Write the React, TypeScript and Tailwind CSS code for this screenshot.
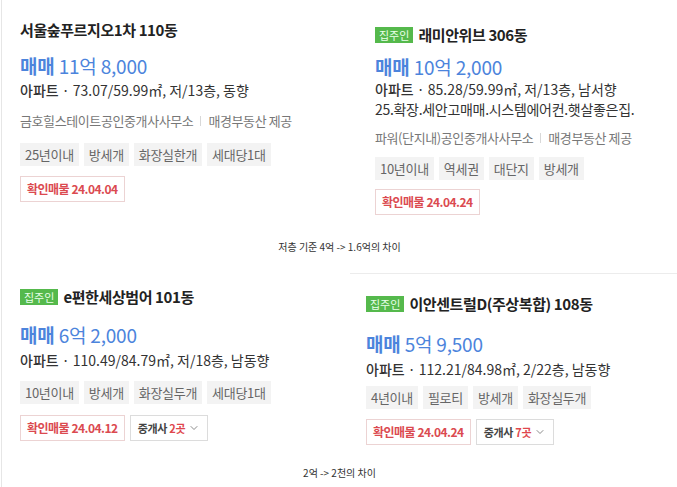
import React from "react";
import { ChevronDown } from "lucide-react";

const font = { fontFamily: '"Noto Sans CJK KR", "Noto Sans", sans-serif' };

function Badge() {
  return (
    <span className="mr-[5px] inline-flex h-[16px] items-center bg-[#55b94c] px-[4px] text-[11px] leading-none text-[#eaffea]">
      집주인
    </span>
  );
}

function Title({ text, owner }: { text: string; owner?: boolean }) {
  return (
    <div className="flex h-[18px] items-center">
      {owner && <Badge />}
      <span className="text-[15px] font-bold leading-[18px] tracking-[-0.4px] text-[#222]">{text}</span>
    </div>
  );
}

function Price({ eok, man }: { eok: string; man: string }) {
  return (
    <div className="h-[22px] text-[19px] leading-[22px] tracking-[-0.2px] text-[#4c84dc]">
      <span className="font-bold">매매</span> {eok} {man}
    </div>
  );
}

function Spec({ text }: { text: string }) {
  return (
    <div className="h-[18px] text-[14px] leading-[18px] tracking-[0px] text-[#333]">
      <span className="font-medium">아파트</span> · {text}
    </div>
  );
}

function Broker({ name }: { name: string }) {
  return (
    <div className="flex h-[16px] items-center text-[13px] leading-[16px] tracking-[-0.4px] text-[#777]">
      <span>{name}</span>
      <span className="mx-[7px] h-[10px] w-px bg-[#d8d8d8]" />
      <span>매경부동산 제공</span>
    </div>
  );
}

function Tags({ items }: { items: string[] }) {
  return (
    <div className="flex gap-[5px]">
      {items.map((t) => (
        <span
          key={t}
          className="flex h-[23px] items-center bg-[#f3f3f3] px-[5px] text-[13px] tracking-[-0.3px] text-[#666]"
        >
          {t}
        </span>
      ))}
    </div>
  );
}

function Verify({ date, agents }: { date: string; agents?: string }) {
  return (
    <div className="flex gap-[5px]">
      <span className="flex h-[26px] items-center border border-[#ecd3d3] px-[6px] text-[12px] font-bold tracking-[-0.5px] text-[#db4a50]">
        확인매물 {date}
      </span>
      {agents && (
        <span className="flex h-[26px] items-center border border-[#dcdcdc] px-[7px] text-[11px] font-bold tracking-[-0.3px] text-[#444]">
          중개사&nbsp;<span className="text-[#e0474d]">{agents}</span>
          <ChevronDown className="ml-[3px] h-[12px] w-[12px] text-[#666]" strokeWidth={1.5} />
        </span>
      )}
    </div>
  );
}

export default function App() {
  return (
    <div className="h-[487px] w-[677px] overflow-hidden bg-white" style={font}>
      <div className="ml-[1px] flex h-full flex-col border-l border-[#e6e6e6]">
        {/* Row 1 */}
        <div className="flex h-[236px]">
          <div className="w-[348px] pl-[18px] pt-[21px]">
            <Title text="서울숲푸르지오1차 110동" />
            <div className="mt-[16px]">
              <Price eok="11억" man="8,000" />
            </div>
            <div className="mt-[4px]">
              <Spec text="73.07/59.99㎡, 저/13층, 동향" />
            </div>
            <div className="mt-[14px]">
              <Broker name="금호힐스테이트공인중개사사무소" />
            </div>
            <div className="mt-[14px]">
              <Tags items={["25년이내", "방세개", "화장실한개", "세대당1대"]} />
            </div>
            <div className="mt-[10px]">
              <Verify date="24.04.04" />
            </div>
          </div>
          <div className="flex-1 pl-[25px] pt-[26px]">
            <Title owner text="래미안위브 306동" />
            <div className="mt-[12px]">
              <Price eok="10억" man="2,000" />
            </div>
            <div className="mt-[2px]">
              <Spec text="85.28/59.99㎡, 저/13층, 남서향" />
            </div>
            <div className="mt-[2px] h-[18px] text-[14px] leading-[18px] tracking-[-0.3px] text-[#333]">
              25.확장.세안고매매.시스템에어컨.햇살좋은집.
            </div>
            <div className="mt-[12px]">
              <Broker name="파워(단지내)공인중개사사무소" />
            </div>
            <div className="mt-[11px]">
              <Tags items={["10년이내", "역세권", "대단지", "방세개"]} />
            </div>
            <div className="mt-[9px]">
              <Verify date="24.04.24" />
            </div>
          </div>
        </div>

        <div className="flex h-[20px] items-center justify-center text-[10px] text-[#333]">
          저층 기준 4억 -&gt; 1.6억의 차이
        </div>

        {/* Row 2 */}
        <div className="flex h-[206px]">
          <div className="w-[348px] pl-[18px] pt-[32px]">
            <Title owner text="e편한세상범어 101동" />
            <div className="mt-[18px]">
              <Price eok="6억" man="2,000" />
            </div>
            <div className="mt-[5px]">
              <Spec text="110.49/84.79㎡, 저/18층, 남동향" />
            </div>
            <div className="mt-[12px]">
              <Tags items={["10년이내", "방세개", "화장실두개", "세대당1대"]} />
            </div>
            <div className="mt-[11px]">
              <Verify date="24.04.12" agents="2곳" />
            </div>
          </div>
          <div className="flex-1">
            <div className="mt-[17px] border-t border-[#ececec] pl-[16px] pt-[21px]">
              <Title owner text="이안센트럴D(주상복합) 108동" />
              <div className="mt-[20px]">
                <Price eok="5억" man="9,500" />
              </div>
              <div className="mt-[5px]">
                <Spec text="112.21/84.98㎡, 2/22층, 남동향" />
              </div>
              <div className="mt-[8px]">
                <Tags items={["4년이내", "필로티", "방세개", "화장실두개"]} />
              </div>
              <div className="mt-[10px]">
                <Verify date="24.04.24" agents="7곳" />
              </div>
            </div>
          </div>
        </div>

        <div className="flex h-[20px] items-center justify-center text-[10px] text-[#333]">
          2억 -&gt; 2천의 차이
        </div>
      </div>
    </div>
  );
}
